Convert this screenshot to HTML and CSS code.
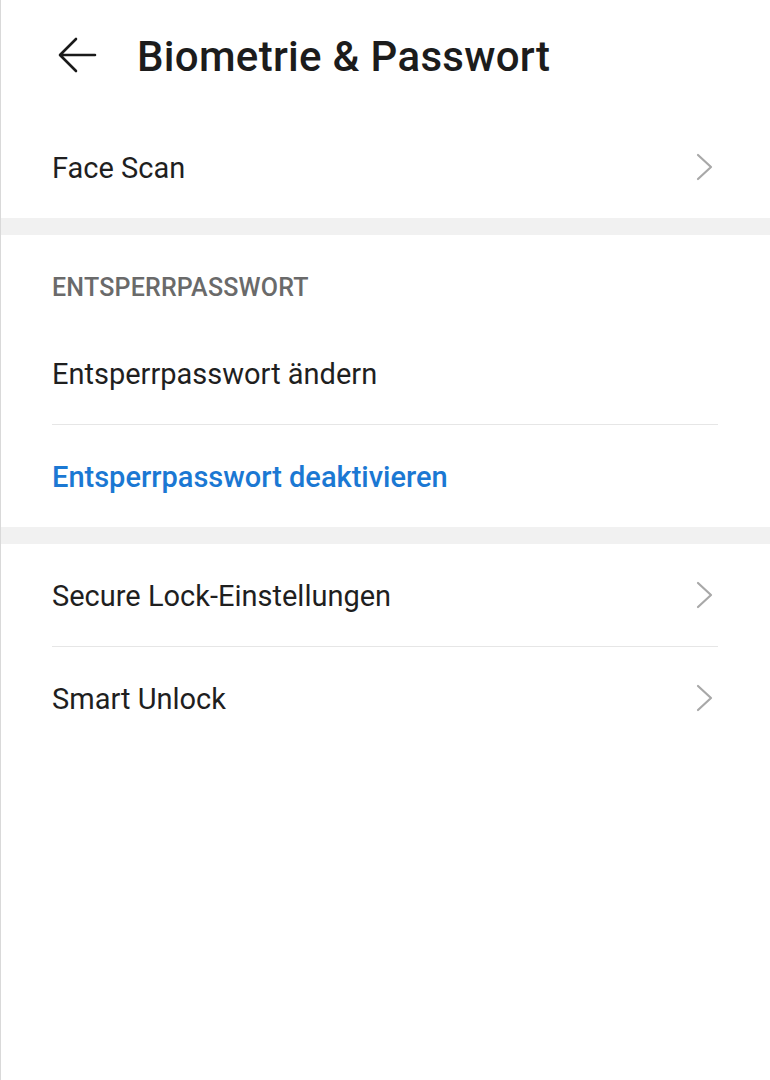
FILE: index.html
```html
<!DOCTYPE html>
<html lang="de">
<head>
    <meta charset="UTF-8">
    <meta name="viewport" content="width=device-width, initial-scale=1.0">
    <title>Biometrie &amp; Passwort</title>
    <link rel="stylesheet" href="styles.css">
</head>
<body>

<div class="screen">
    <header class="topbar">
        <svg class="back" width="40" height="40" viewBox="0 0 40 40">
            <path d="M38 19H4M19 3L3 19l16 16" fill="none" stroke="#1a1a1a" stroke-width="2.6" stroke-linecap="round" stroke-linejoin="round"/>
        </svg>
        <h1>Biometrie &amp; Passwort</h1>
    </header>

    <div class="group">
        <div class="row">
            <span class="label">Face Scan</span>
            <svg class="chevron" width="18" height="28" viewBox="0 0 18 28"><path d="M2 2l13 12L2 26" fill="none" stroke="#a8a8a8" stroke-width="2.2" stroke-linecap="round" stroke-linejoin="round"/></svg>
        </div>
    </div>

    <div class="gap"></div>

    <div class="group">
        <div class="section-title">ENTSPERRPASSWORT</div>
        <div class="row divided">
            <span class="label">Entsperrpasswort ändern</span>
        </div>
        <div class="row">
            <span class="label link">Entsperrpasswort deaktivieren</span>
        </div>
    </div>

    <div class="gap"></div>

    <div class="group">
        <div class="row divided">
            <span class="label">Secure Lock-Einstellungen</span>
            <svg class="chevron" width="18" height="28" viewBox="0 0 18 28"><path d="M2 2l13 12L2 26" fill="none" stroke="#a8a8a8" stroke-width="2.2" stroke-linecap="round" stroke-linejoin="round"/></svg>
        </div>
        <div class="row">
            <span class="label">Smart Unlock</span>
            <svg class="chevron" width="18" height="28" viewBox="0 0 18 28"><path d="M2 2l13 12L2 26" fill="none" stroke="#a8a8a8" stroke-width="2.2" stroke-linecap="round" stroke-linejoin="round"/></svg>
        </div>
    </div>
</div>

</body>
</html>
```

FILE: styles.css
```css
body {
    margin: 0;
    padding: 0;
    background-color: #ffffff;
    font-family: Roboto, 'Noto Sans', sans-serif;
    color: #1f1f1f;
}

.screen {
    min-height: 1080px;
    border-left: 1px solid #d9d9d9;
    box-sizing: border-box;
}

.topbar {
    height: 116px;
    display: flex;
    align-items: center;
    padding-left: 56px;
    box-sizing: border-box;
}

.back {
    flex-shrink: 0;
    margin-top: -4px;
}

.topbar h1 {
    margin: 0 0 4px 40px;
    font-size: 42px;
    font-weight: 500;
    color: #1c1c1c;
    letter-spacing: 0.3px;
}

.group {
    padding: 0 52px 0 51px;
}

.gap {
    height: 17px;
    background-color: #f1f1f1;
}

.section-title {
    padding: 38px 0 19px;
    line-height: 30px;
    font-size: 25px;
    font-weight: 500;
    color: #6a6a6a;
    letter-spacing: 0.2px;
}

.row {
    height: 102px;
    display: flex;
    align-items: center;
    justify-content: space-between;
}

.row.divided {
    border-bottom: 1px solid #e6e6e6;
}

.label {
    font-size: 29px;
    margin-top: 2px;
}

.label.link {
    color: #1b78d3;
    font-weight: 500;
}

.chevron {
    margin-right: 4px;
}
```
